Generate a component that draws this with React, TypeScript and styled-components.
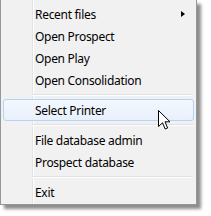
import * as React from 'react'
import styled, { createGlobalStyle } from 'styled-components'

const GlobalStyle = createGlobalStyle`
  html, body {
    margin: 0;
    padding: 0;
    background: #ffffff;
  }
`

const Page = styled.div`
  width: 211px;
  height: 216px;
  overflow: hidden;
  position: relative;
`

const Menu = styled.div`
  position: relative;
  box-sizing: border-box;
  width: 197px;
  padding: 3px 2px 1px 2px;
  border: 1px solid #979797;
  border-top: none;
  background:
    linear-gradient(to right, transparent 31px, #e2e3e3 31px, #e2e3e3 32px, #ffffff 32px, #ffffff 33px, transparent 33px),
    #f1f1f1;
  box-shadow: 4px 4px 3px rgba(0, 0, 0, 0.45);
  font-family: 'Noto Sans', 'Open Sans', sans-serif;
  font-size: 12px;
  letter-spacing: -0.3px;
  color: #000000;
  user-select: none;
`

const Item = styled.div<{ $highlighted?: boolean }>`
  position: relative;
  box-sizing: border-box;
  height: 22px;
  display: flex;
  align-items: center;
  padding-left: 31px;
  border: 1px solid ${p => (p.$highlighted ? '#b3d3f7' : 'transparent')};
  border-radius: 3px;
  background: ${p => (p.$highlighted
    ? 'linear-gradient(to bottom, #f3f8fe, #e8f0fb)'
    : 'transparent')};
`

const Label = styled.span`
  white-space: nowrap;
`

const SubArrow = styled.span`
  position: absolute;
  right: 8px;
  top: 7px;
  width: 0;
  height: 0;
  border-top: 3.5px solid transparent;
  border-bottom: 3.5px solid transparent;
  border-left: 4px solid #000000;
`

const Separator = styled.div`
  height: 8px;
  margin: 0 1px 0 29px;
  display: flex;
  flex-direction: column;
  justify-content: center;

  &::before {
    content: '';
    display: block;
    height: 1px;
    background: #e0e0e0;
  }

  &::after {
    content: '';
    display: block;
    height: 1px;
    background: #ffffff;
  }
`

const Cursor = styled.svg`
  position: absolute;
  left: 158px;
  top: 110px;
  width: 13px;
  height: 20px;
  pointer-events: none;
`

const ArrowCursor = () => (
  <Cursor viewBox="0 0 13 20">
    <path
      d="M0.5 0.5 L0.5 16.5 L4.5 12.8 L7.2 19 L9.6 18 L7 11.8 L12 11.8 Z"
      fill="#ffffff"
      stroke="#000000"
      strokeWidth="1"
      strokeLinejoin="miter"
    />
  </Cursor>
)

type Entry = { label: string, sub?: boolean, highlighted?: boolean } | 'separator'

const entries: Entry[] = [
  { label: 'Recent files', sub: true },
  { label: 'Open Prospect' },
  { label: 'Open Play' },
  { label: 'Open Consolidation' },
  'separator',
  { label: 'Select Printer', highlighted: true },
  'separator',
  { label: 'File database admin' },
  { label: 'Prospect database' },
  'separator',
  { label: 'Exit' },
]

const App = () => (
  <Page>
    <GlobalStyle />
    <Menu>
      {entries.map((e, i) => e === 'separator' ? (
        <Separator key={i} />
      ) : (
        <Item key={i} $highlighted={e.highlighted}>
          <Label>{e.label}</Label>
          {e.sub && <SubArrow />}
        </Item>
      ))}
    </Menu>
    <ArrowCursor />
  </Page>
)

export default App
